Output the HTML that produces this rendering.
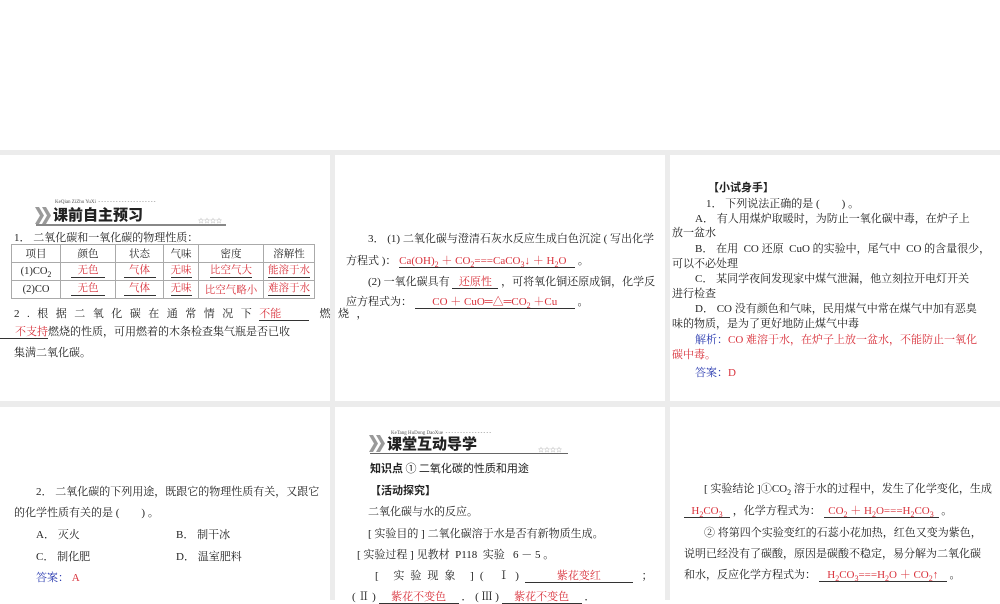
<!DOCTYPE html>
<html><head><meta charset="utf-8"><style>
body{margin:0;width:1000px;height:600px;background:#fff;position:relative;overflow:hidden;font-family:"Liberation Serif","Noto Serif CJK SC","Noto Sans CJK SC",serif;font-size:11px;color:#222}
.g{position:absolute;background:#ececec}
.t{position:absolute;white-space:nowrap;line-height:14px}
.r{color:#d8303a}
.b{color:#2a3bb0}
.u{display:inline-block;border-bottom:1px solid #333;text-align:center;line-height:12px}
.h{font-family:"Noto Sans CJK SC",sans-serif;font-weight:900;font-size:15px}
.sm{font-size:8px;line-height:0}
table{position:absolute;border-collapse:collapse;font-size:10.5px}
td{border:1px solid #aaa;height:17px;text-align:center;padding:0}
svg{position:absolute}
</style></head><body>
<div class="g" style="left:0;top:150px;width:1000px;height:5px"></div>
<div class="g" style="left:0;top:401px;width:1000px;height:6px"></div>
<div class="g" style="left:330px;top:150px;width:5px;height:450px"></div>
<div class="g" style="left:665px;top:150px;width:5px;height:450px"></div>

<!-- panel 1 -->
<div class="t" style="left:55px;top:200px;font-size:5px;color:#555;line-height:6px">KeQian ZiZhu YuXi &nbsp;- - - - - - - - - - - - - - - - - - - -</div>
<svg style="left:35px;top:207px" width="17" height="17" viewBox="0 0 17 17"><polygon points="0,0 4,0 9,8.5 4,17 0,17 5,8.5" fill="#9a9a9a"/><polygon points="7,0 11,0 16,8.5 11,17 7,17 12,8.5" fill="#9a9a9a"/></svg>
<div class="t h" style="left:53px;top:206px;line-height:18px">课前自主预习</div>
<div class="t" style="left:198px;top:215px;font-size:6px;color:#999">☆☆☆☆</div>
<div style="position:absolute;left:36px;top:224px;width:190px;height:2px;background:#888"></div>
<div class="t" style="left:14px;top:231px">1． 二氧化碳和一氧化碳的物理性质：</div>
<table style="left:11px;top:244px;width:304px">
<tr><td style="width:48px">项目</td><td style="width:54px">颜色</td><td style="width:47px">状态</td><td style="width:34px">气味</td><td style="width:64px">密度</td><td>溶解性</td></tr>
<tr><td>(1)CO<sub class="sm">2</sub></td><td class="r"><span class="u" style="width:34px">无色</span></td><td class="r"><span class="u" style="width:32px">气体</span></td><td class="r"><span class="u">无味</span></td><td class="r"><span class="u">比空气大</span></td><td class="r"><span class="u">能溶于水</span></td></tr>
<tr><td>(2)CO</td><td class="r"><span class="u" style="width:34px">无色</span></td><td class="r"><span class="u" style="width:32px">气体</span></td><td class="r"><span class="u">无味</span></td><td class="r">比空气略小</td><td class="r"><span class="u">难溶于水</span></td></tr>
</table>
<div class="t" style="left:14px;top:307px;letter-spacing:7.5px">2.根据二氧化碳在通常情况下<span class="r u" style="width:50px;letter-spacing:0;text-align:left">不能</span> 燃烧，</div>
<div class="t" style="left:0;top:325px"><span class="r u" style="width:48px;text-align:right">不支持</span>燃烧的性质，可用燃着的木条检查集气瓶是否已收</div>
<div class="t" style="left:14px;top:346px">集满二氧化碳。</div>

<!-- panel 2 -->
<div class="t" style="left:368px;top:232px">3． (1) 二氧化碳与澄清石灰水反应生成白色沉淀 ( 写出化学</div>
<div class="t" style="left:346px;top:254px">方程式 )： <span class="r u" style="width:176px;text-align:left">Ca(OH)<sub class="sm">2</sub> ＋ CO<sub class="sm">2</sub>===CaCO<sub class="sm">3</sub>↓ ＋ H<sub class="sm">2</sub>O</span> 。</div>
<div class="t" style="left:368px;top:275px">(2) 一氧化碳具有 <span class="r u" style="width:46px">还原性</span> ，可将氧化铜还原成铜，化学反</div>
<div class="t" style="left:346px;top:295px">应方程式为： <span class="r u" style="width:160px">CO ＋ CuO<span style="color:#d8303a">═△═</span>CO<sub class="sm">2</sub> ＋Cu</span> 。</div>

<!-- panel 3 -->
<div class="t" style="left:708px;top:180px;font-family:'Noto Sans CJK SC',sans-serif;font-weight:bold">【小试身手】</div>
<div class="t" style="left:706px;top:197px">1． 下列说法正确的是 (　　) 。</div>
<div class="t" style="left:695px;top:212px">A． 有人用煤炉取暖时，为防止一氧化碳中毒，在炉子上</div>
<div class="t" style="left:672px;top:226px">放一盆水</div>
<div class="t" style="left:695px;top:242px">B． 在用 &nbsp;CO 还原 &nbsp;CuO 的实验中，尾气中 &nbsp;CO 的含量很少，</div>
<div class="t" style="left:672px;top:257px">可以不必处理</div>
<div class="t" style="left:695px;top:272px">C． 某同学夜间发现家中煤气泄漏，他立刻拉开电灯开关</div>
<div class="t" style="left:672px;top:287px">进行检查</div>
<div class="t" style="left:695px;top:302px">D． CO 没有颜色和气味，民用煤气中常在煤气中加有恶臭</div>
<div class="t" style="left:672px;top:317px">味的物质，是为了更好地防止煤气中毒</div>
<div class="t" style="left:695px;top:333px"><span class="b">解析：</span><span class="r">CO 难溶于水，在炉子上放一盆水，不能防止一氧化</span></div>
<div class="t r" style="left:672px;top:348px">碳中毒。</div>
<div class="t" style="left:695px;top:366px"><span class="b">答案：</span><span class="r">D</span></div>

<!-- panel 4 -->
<div class="t" style="left:36px;top:485px">2． 二氧化碳的下列用途，既跟它的物理性质有关，又跟它</div>
<div class="t" style="left:14px;top:506px">的化学性质有关的是 (　　) 。</div>
<div class="t" style="left:36px;top:528px">A． 灭火</div>
<div class="t" style="left:176px;top:528px">B． 制干冰</div>
<div class="t" style="left:36px;top:550px">C． 制化肥</div>
<div class="t" style="left:176px;top:550px">D． 温室肥料</div>
<div class="t" style="left:36px;top:571px"><span class="b">答案：</span> <span class="r">A</span></div>

<!-- panel 5 -->
<div class="t" style="left:391px;top:431px;font-size:5px;color:#555;line-height:6px">KeTang HuDong DaoXue &nbsp;- - - - - - - - - - - - - - - -</div>
<svg style="left:369px;top:435px" width="17" height="17" viewBox="0 0 17 17"><polygon points="0,0 4,0 9,8.5 4,17 0,17 5,8.5" fill="#9a9a9a"/><polygon points="7,0 11,0 16,8.5 11,17 7,17 12,8.5" fill="#9a9a9a"/></svg>
<div class="t h" style="left:387px;top:435px;line-height:18px">课堂互动导学</div>
<div class="t" style="left:538px;top:444px;font-size:6px;color:#999">☆☆☆☆</div>
<div style="position:absolute;left:370px;top:453px;width:198px;height:1px;background:#666"></div>
<div class="t" style="left:370px;top:461px;font-family:'Noto Sans CJK SC',sans-serif"><b>知识点</b> ①  二氧化碳的性质和用途</div>
<div class="t" style="left:370px;top:483px;font-family:'Noto Sans CJK SC',sans-serif;font-weight:bold">【活动探究】</div>
<div class="t" style="left:368px;top:505px">二氧化碳与水的反应。</div>
<div class="t" style="left:368px;top:527px">[ 实验目的 ] 二氧化碳溶于水是否有新物质生成。</div>
<div class="t" style="left:357px;top:548px">[ 实验过程 ] 见教材 &nbsp;P118 &nbsp;实验 &nbsp; 6 － 5 。</div>
<div class="t" style="left:375px;top:569px;letter-spacing:6px">[ 实验现象 ]( Ⅰ)<span class="r u" style="width:108px;letter-spacing:0">紫花变红</span> ；</div>
<div class="t" style="left:352px;top:590px">( Ⅱ ) <span class="r u" style="width:80px">紫花不变色</span> ． ( Ⅲ ) <span class="r u" style="width:80px">紫花不变色</span> ．</div>

<!-- panel 6 -->
<div class="t" style="left:704px;top:482px">[ 实验结论 ]①CO<sub class="sm">2</sub> 溶于水的过程中，发生了化学变化，生成</div>
<div class="t" style="left:684px;top:504px"><span class="r u" style="width:46px">H<sub class="sm">2</sub>CO<sub class="sm">3</sub></span> ，化学方程式为： <span class="r u" style="width:115px">CO<sub class="sm">2</sub> ＋ H<sub class="sm">2</sub>O===H<sub class="sm">2</sub>CO<sub class="sm">3</sub></span> 。</div>
<div class="t" style="left:704px;top:526px">② 将第四个实验变红的石蕊小花加热，红色又变为紫色，</div>
<div class="t" style="left:684px;top:547px">说明已经没有了碳酸，原因是碳酸不稳定，易分解为二氧化碳</div>
<div class="t" style="left:684px;top:568px">和水，反应化学方程式为： <span class="r u" style="width:128px">H<sub class="sm">2</sub>CO<sub class="sm">3</sub>===H<sub class="sm">2</sub>O ＋ CO<sub class="sm">2</sub>↑</span> 。</div>
</body></html>
